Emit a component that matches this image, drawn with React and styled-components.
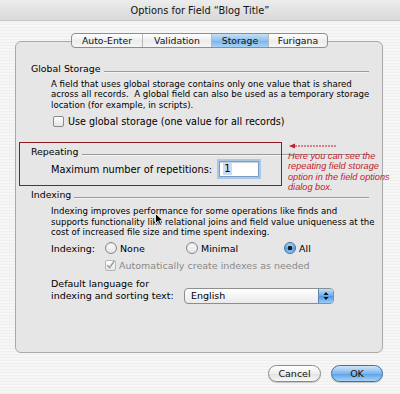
import React from 'react';
import styled, { createGlobalStyle } from 'styled-components';

const GlobalStyle = createGlobalStyle`
  html, body { margin: 0; padding: 0; }
  body {
    width: 400px;
    height: 394px;
    overflow: hidden;
    font-family: "DejaVu Sans", "Noto Sans", sans-serif;
    color: #000;
  }
`;

const Window = styled.div`
  position: relative;
  width: 400px;
  height: 394px;
  display: flex;
  flex-direction: column;
  overflow: hidden;
  background: repeating-linear-gradient(to bottom, #efefef 0 1px, #f6f6f6 1px 3px);
`;

const TitleBar = styled.div`
  height: 20px;
  flex-shrink: 0;
  display: flex;
  align-items: center;
  justify-content: center;
  font-size: 9.8px;
  color: #111;
  background: linear-gradient(to bottom, #ececec, #d9d9d9);
  border-bottom: 1px solid #c9c9c9;
`;

const Body = styled.div`
  flex: 1;
  display: flex;
  flex-direction: column;
  padding: 12px 17px 0 15px;
`;

const Tabs = styled.div`
  align-self: center;
  display: flex;
  height: 13px;
  margin-bottom: -7px;
  margin-left: 1px;
  position: relative;
  z-index: 1;
  border: 1px solid #8d8d8d;
  border-radius: 4px;
  overflow: hidden;
  background: linear-gradient(to bottom, #ffffff, #ececec 55%, #f6f6f6);
`;

const Tab = styled.div`
  display: flex;
  align-items: center;
  justify-content: center;
  width: ${p => p.$w}px;
  font-size: 9.3px;
  color: #111;
  border-left: ${p => (p.$first ? 'none' : '1px solid #b8b8b8')};
  background: ${p =>
    p.$active
      ? 'linear-gradient(to bottom, #c7e0f7, #8fc0ee 50%, #77b1ea 51%, #a9d2f6)'
      : 'transparent'};
`;

const Panel = styled.div`
  box-sizing: border-box;
  height: 312px;
  flex-shrink: 0;
  border: 1px solid #a8a8a8;
  border-radius: 6px;
  background: #e6e6e6;
  padding: 19px 13px 0 15px;
  display: flex;
  flex-direction: column;
`;

const SectionHeader = styled.div`
  display: flex;
  align-items: center;
  height: 14px;
  font-size: 9.4px;
  margin-top: ${p => p.$mt || 0}px;

  &::after {
    content: '';
    flex: 1;
    height: 1px;
    margin: 6px 0 0 3px;
    background: #9a9a9a;
    box-shadow: 0 1px 0 #f4f4f4;
  }
`;

const Description = styled.p`
  margin: ${p => p.$mt || 0}px 0 0 20px;
  font-size: 8.6px;
  line-height: 10.4px;
  white-space: nowrap;
  color: #000;
`;

const Row = styled.div`
  display: flex;
  align-items: center;
  white-space: nowrap;
  margin: ${p => p.$mt || 0}px 0 0 ${p => p.$ml ?? 20}px;
  height: ${p => p.$h || 14}px;
  font-size: ${p => p.$fs || 9.5}px;
  color: ${p => (p.$muted ? '#8a8a8a' : '#000')};
`;

const CheckBox = styled.span`
  box-sizing: border-box;
  width: 11px;
  height: 11px;
  margin-right: ${p => p.$gap ?? 3}px;
  border: 1px solid ${p => (p.$disabled ? '#b5b5b5' : '#8a8a8a')};
  border-radius: 2px;
  background: linear-gradient(to bottom, #ffffff, #e4e4e4);
  display: flex;
  align-items: center;
  justify-content: center;
  flex-shrink: 0;
`;

const FieldLabel = styled.span`
  width: ${p => p.$w}px;
  flex-shrink: 0;
`;

const RadioGroup = styled.div`
  display: grid;
  grid-template-columns: 81px 98px auto;
`;

const Radio = styled.label`
  display: flex;
  align-items: center;
  gap: 3px;
`;

const RadioDot = styled.span`
  box-sizing: border-box;
  width: 12px;
  height: 12px;
  border-radius: 50%;
  border: 1px solid ${p => (p.$on ? '#3d6fa8' : '#8a8a8a')};
  background: ${p =>
    p.$on
      ? 'radial-gradient(circle at 50% 50%, #1a1a1a 0 2px, transparent 2.5px), linear-gradient(to bottom, #bfe0fb, #5da4e6 55%, #8cc5f4)'
      : 'linear-gradient(to bottom, #ffffff, #e2e2e2)'};
  box-shadow: inset 0 1px 1px rgba(0, 0, 0, 0.15);
`;

const NumberInput = styled.div`
  box-sizing: border-box;
  width: 40px;
  height: 16px;
  margin-left: 7px;
  padding: 0 3px;
  display: flex;
  align-items: center;
  background: #fff;
  border: 1px solid #7f9cc2;
  box-shadow: 0 0 0 2px #a9c7ec, inset 0 1px 1px rgba(0, 0, 0, 0.2);
  font-size: 10px;
`;

const Selected = styled.span`
  background: #c9dcf3;
  padding: 0 1px;
  line-height: 12px;
`;

const LanguageRow = styled.div`
  display: flex;
  align-items: flex-end;
  margin: 6px 0 0 20px;
`;

const LanguageLabel = styled.div`
  font-size: 9.5px;
  line-height: 11.5px;
  width: 133px;
  white-space: nowrap;
  padding-bottom: 2.5px;
`;

const PopUp = styled.div`
  box-sizing: border-box;
  width: 150px;
  height: 16px;
  display: flex;
  align-items: center;
  border: 1px solid #8e8e8e;
  border-radius: 4px;
  overflow: hidden;
  background: linear-gradient(to bottom, #ffffff, #eaeaea);
  font-size: 9.5px;
`;

const PopUpText = styled.span`
  flex: 1;
  padding-left: 6px;
`;

const PopUpArrows = styled.span`
  width: 14px;
  height: 100%;
  display: flex;
  align-items: center;
  justify-content: center;
  background: linear-gradient(to bottom, #c2dff8, #6aaaf0 50%, #4f96e6 51%, #9acdf8);
  border-left: 1px solid #5d86b5;
`;

const Footer = styled.div`
  display: flex;
  justify-content: flex-end;
  gap: 10px;
  margin-top: 12px;
`;

const Button = styled.div`
  box-sizing: border-box;
  width: ${p => p.$w}px;
  height: 17px;
  border-radius: 9px;
  display: flex;
  align-items: center;
  justify-content: center;
  font-size: 9.5px;
  color: #111;
  border: 1px solid ${p => (p.$primary ? '#3f6ea5' : '#8a8a8a')};
  background: ${p =>
    p.$primary
      ? 'linear-gradient(to bottom, #cfe6fb, #7cb6ee 50%, #5a9ee6 51%, #a6d4fb)'
      : 'linear-gradient(to bottom, #ffffff, #eeeeee 50%, #e0e0e0 51%, #f7f7f7)'};
  box-shadow: 0 1px 1px rgba(0, 0, 0, 0.2);
`;

const RedBox = styled.div`
  position: absolute;
  left: 19px;
  top: 142px;
  width: 263px;
  height: 44px;
  box-sizing: border-box;
  border: 1.5px solid #8c1c22;
  pointer-events: none;
`;

const Note = styled.div`
  position: absolute;
  left: 288px;
  top: 143px;
  width: 112px;
  white-space: nowrap;
  font-family: "Liberation Sans", Arial, sans-serif;
  font-style: italic;
  font-size: 9.2px;
  line-height: 10.3px;
  color: #c4202b;
`;

const NoteArrow = styled.svg`
  display: block;
  margin: 0 0 2px 1px;
`;

const Cursor = styled.svg`
  position: absolute;
  left: 155px;
  top: 213px;
`;

const ArrowCheck = () => (
  <svg width="10" height="10" viewBox="0 0 10 10">
    <path d="M1.5 5.2 L4 8 L9 0.8" fill="none" stroke="#9a9a9a" strokeWidth="1.6" />
  </svg>
);

export default function App() {
  return (
    <>
      <GlobalStyle />
      <Window>
        <TitleBar>Options for Field “Blog Title”</TitleBar>
        <Body>
          <Tabs>
            <Tab $first $w={70}>Auto-Enter</Tab>
            <Tab $w={68}>Validation</Tab>
            <Tab $w={56} $active>Storage</Tab>
            <Tab $w={58}>Furigana</Tab>
          </Tabs>
          <Panel>
            <SectionHeader>Global Storage</SectionHeader>
            <Description $mt={4}>
              A field that uses global storage contains only one value that is shared
              <br />
              across all records.&nbsp; A global field can also be used as a temporary storage
              <br />
              location (for example, in scripts).
            </Description>
            <Row $mt={4} $ml={22} $fs={9.6}>
              <CheckBox $gap={4} />
              Use global storage (one value for all records)
            </Row>

            <SectionHeader $mt={16}>Repeating</SectionHeader>
            <Row $mt={3} $h={16} $fs={9.8}>
              Maximum number of repetitions:
              <NumberInput>
                <Selected>1</Selected>
              </NumberInput>
            </Row>

            <SectionHeader $mt={10}>Indexing</SectionHeader>
            <Description $mt={5}>
              Indexing improves performance for some operations like finds and
              <br />
              supports functionality like relational joins and field value uniqueness at the
              <br />
              cost of increased file size and time spent indexing.
            </Description>
            <Row $mt={4}>
              <FieldLabel $w={54}>Indexing:</FieldLabel>
              <RadioGroup>
                <Radio>
                  <RadioDot />
                  None
                </Radio>
                <Radio>
                  <RadioDot />
                  Minimal
                </Radio>
                <Radio>
                  <RadioDot $on />
                  All
                </Radio>
              </RadioGroup>
            </Row>
            <Row $mt={3} $ml={74} $muted>
              <CheckBox $disabled>
                <ArrowCheck />
              </CheckBox>
              Automatically create indexes as needed
            </Row>

            <LanguageRow>
              <LanguageLabel>
                Default language for
                <br />
                indexing and sorting text:
              </LanguageLabel>
              <PopUp>
                <PopUpText>English</PopUpText>
                <PopUpArrows>
                  <svg width="6" height="10" viewBox="0 0 6 10">
                    <path d="M0.5 4 L3 1 L5.5 4 Z M0.5 6 L3 9 L5.5 6 Z" fill="#111" />
                  </svg>
                </PopUpArrows>
              </PopUp>
            </LanguageRow>
          </Panel>
          <Footer>
            <Button $w={53}>Cancel</Button>
            <Button $w={52} $primary>OK</Button>
          </Footer>
        </Body>

        <RedBox />
        <Note>
          <NoteArrow width="48" height="6" viewBox="0 0 48 6">
            <path d="M0 3 L6 0.5 L6 5.5 Z" fill="#c4202b" />
            <path d="M6 3 H47" stroke="#c4202b" strokeWidth="1.2" strokeDasharray="2 1" />
          </NoteArrow>
          Here you can see the
          <br />
          repeating field storage
          <br />
          option in the field options
          <br />
          dialog box.
        </Note>
        <Cursor width="9" height="13" viewBox="0 0 9 13">
          <path d="M0.5 0.5 L0.5 10.5 L3 8.2 L5 12.3 L6.6 11.6 L4.7 7.6 L8 7.6 Z" fill="#000" stroke="#fff" strokeWidth="0.8" />
        </Cursor>
      </Window>
    </>
  );
}
